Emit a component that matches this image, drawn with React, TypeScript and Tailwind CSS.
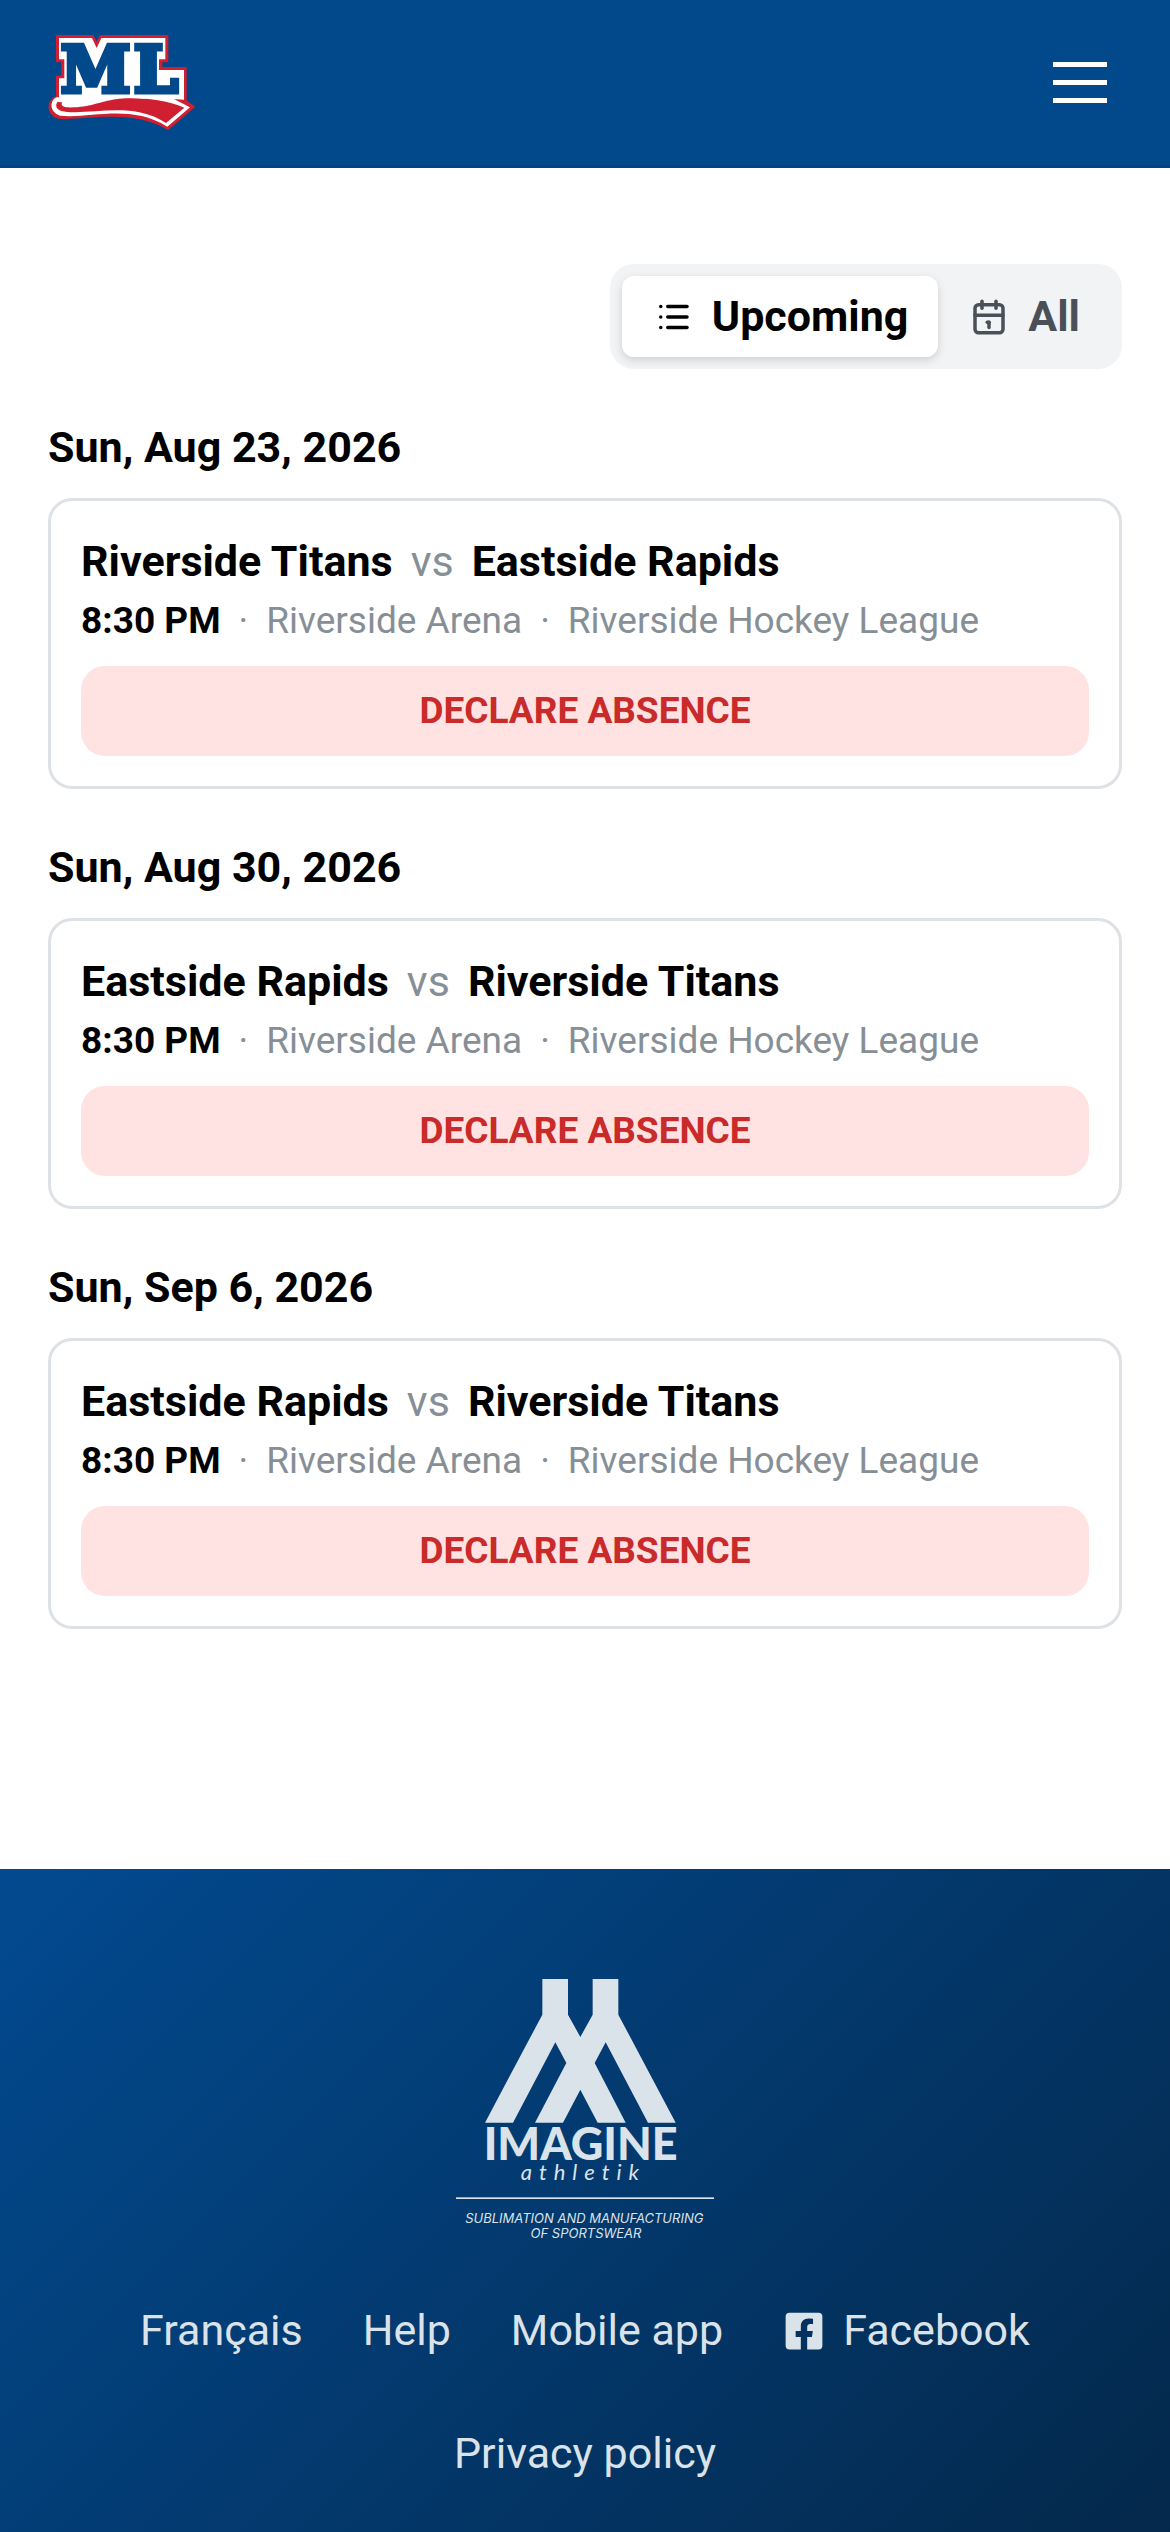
import { useState } from 'react';
import { TbCalendar, TbList } from 'react-icons/tb';
import { FaFacebookSquare } from 'react-icons/fa';

interface Game {
  id: number;
  date: string;
  time: string;
  home: string;
  away: string;
  arena: string;
  league: string;
}

const games: Game[] = [
  { id: 1, date: 'Sun, Aug 23, 2026', time: '8:30 PM', home: 'Riverside Titans', away: 'Eastside Rapids', arena: 'Riverside Arena', league: 'Riverside Hockey League' },
  { id: 2, date: 'Sun, Aug 30, 2026', time: '8:30 PM', home: 'Eastside Rapids', away: 'Riverside Titans', arena: 'Riverside Arena', league: 'Riverside Hockey League' },
  { id: 3, date: 'Sun, Sep 6, 2026', time: '8:30 PM', home: 'Eastside Rapids', away: 'Riverside Titans', arena: 'Riverside Arena', league: 'Riverside Hockey League' },
];

type View = 'upcoming' | 'all';

const views = [
  { id: 'upcoming' as View, label: 'Upcoming', icon: TbList },
  { id: 'all' as View, label: 'All', icon: TbCalendar },
];

const links = [
  { label: 'Français' },
  { label: 'Help' },
  { label: 'Mobile app' },
  { label: 'Facebook', icon: FaFacebookSquare },
  { label: 'Privacy policy' },
];

function TeamLogo() {
  return (
    <svg viewBox="54 42 444 291" className="w-[148px] h-[97px] overflow-visible" role="img" aria-label="ML">
      {/* plate */}
      <path fill="#d01f31" d="M78 45H190L200 64L210 45H415V127H397V141H470V246H78V167H94V127H78Z" />
      {/* ribbon */}
      <path fill="#d01f31" d="M80 228C48 238 46 284 84 296C160 304 305 262 414 331L496 260L462 236Z" />
      <path fill="#fff" d="M80 232C58 242 58 276 90 287C180 297 300 250 412 320L480 262L430 236Z" />
      <path fill="#d01f31" d="M82 246C72 262 84 274 112 276C200 282 310 246 408 309L463 263C400 234 300 232 262 237C200 246 180 264 110 262C96 260 92 254 97 247Z" />
      <path fill="#fff" d="M87 54H186L200 84L214 54H406V118H387V150H462V239C400 236 380 240 300 234C240 234 200 240 180 240H87V175H103V118H87Z" />
      <g
        fill="#02498c"
        stroke="#02498c"
        strokeWidth="15"
        fontSize="189"
        fontWeight="700"
        textAnchor="middle"
        fontFamily="'DejaVu Serif', serif"
      >
        <text x="197" y="215">M</text>
        <text x="378" y="215">L</text>
      </g>
    </svg>
  );
}

function SponsorLogo() {
  return (
    <svg viewBox="51 88 774 789" className="w-[258px] h-[263px] overflow-visible" fill="#dbe3ea" role="img" aria-label="Imagine Athletik">
      <path d="M310 88H387V195L424 262L461 195V88H538V195L710 519H627L500 278L467 340L560 519H476L424 420L372 519H288L382 340L349 278L222 519H138L310 195Z" />
      <text x="425" y="632" fontSize="135" fontWeight="900" textAnchor="middle" fontFamily="Lato, sans-serif">IMAGINE</text>
      <text x="245" y="692" fontSize="66" fontStyle="italic" letterSpacing="21" fontFamily="Lato, sans-serif">athletik</text>
      <rect x="51" y="743" width="774" height="5" />
      <text fontSize="39" fontStyle="italic" textAnchor="middle" fontFamily="Inter, sans-serif">
        <tspan x="436" y="820">SUBLIMATION AND MANUFACTURING</tspan>
        <tspan x="441" y="864">OF SPORTSWEAR</tspan>
      </text>
    </svg>
  );
}

function GameCard({ game }: { game: Game }) {
  return (
    <section>
      <h2 className="text-[43px] leading-[60px] font-bold">{game.date}</h2>
      <div className="mt-[21px] p-[30px] border-3 border-[#dee2e6] rounded-3xl">
        <div className="flex items-center gap-[18px] text-[43px] leading-[60px] font-bold">
          <span>{game.home}</span>
          <span className="font-normal text-[#868e96]">vs</span>
          <span>{game.away}</span>
        </div>
        <div className="mt-[3px] flex items-center gap-[18px] text-[37px] leading-[54px] text-[#868e96]">
          <span className="font-bold text-black">{game.time}</span>
          <span>·</span>
          <span>{game.arena}</span>
          <span>·</span>
          <span>{game.league}</span>
        </div>
        <button
          type="button"
          className="mt-[18px] w-full h-[90px] rounded-3xl bg-[#ffe3e3] text-[37px] font-bold uppercase text-[#c92a2a]"
        >
          Declare absence
        </button>
      </div>
    </section>
  );
}

export default function App() {
  const [view, setView] = useState<View>('upcoming');

  return (
    <div className="min-h-screen flex flex-col bg-white text-black font-['Roboto',sans-serif]">
      <header className="h-[168px] flex items-center justify-between pl-12 pr-[63px] bg-[#02498c] border-b-3 border-[#024280]">
        <a href="#home"><TeamLogo /></a>
        <button type="button" aria-label="Open menu" className="flex flex-col gap-[13px]">
          <span className="w-[54px] h-[5px] bg-white" />
          <span className="w-[54px] h-[5px] bg-white" />
          <span className="w-[54px] h-[5px] bg-white" />
        </button>
      </header>

      <main className="flex-1 px-12 pt-24 pb-60">
        <div className="flex justify-end">
          <div className="flex p-3 rounded-3xl bg-[#f1f3f5]">
            {views.map(({ id, label, icon: Icon }) => (
              <button
                key={id}
                type="button"
                aria-pressed={view === id}
                onClick={() => setView(id)}
                className={`h-[81px] flex items-center gap-[18px] px-[30px] rounded-xl text-[43px] font-bold ${
                  view === id ? 'bg-white text-black shadow-[0_3px_9px_rgba(0,0,0,0.15)]' : 'text-[#495057]'
                }`}
              >
                <Icon size={42} />
                {label}
              </button>
            ))}
          </div>
        </div>

        <div className="mt-12 flex flex-col gap-12">
          {games.map((game) => <GameCard key={game.id} game={game} />)}
        </div>
      </main>

      <footer className="flex flex-col items-center px-12 pt-[110px] pb-[47px] bg-[linear-gradient(135deg,#024a90,#04284b)]">
        <SponsorLogo />
        <nav className="mt-[57px] flex flex-wrap justify-center gap-[60px] text-[43px] leading-[63px] text-[#dbe3ea]">
          {links.map(({ label, icon: Icon }) => (
            <a key={label} href="#footer" className="flex items-center gap-[18px]">
              {Icon && <Icon size={42} />}
              {label}
            </a>
          ))}
        </nav>
      </footer>
    </div>
  );
}
